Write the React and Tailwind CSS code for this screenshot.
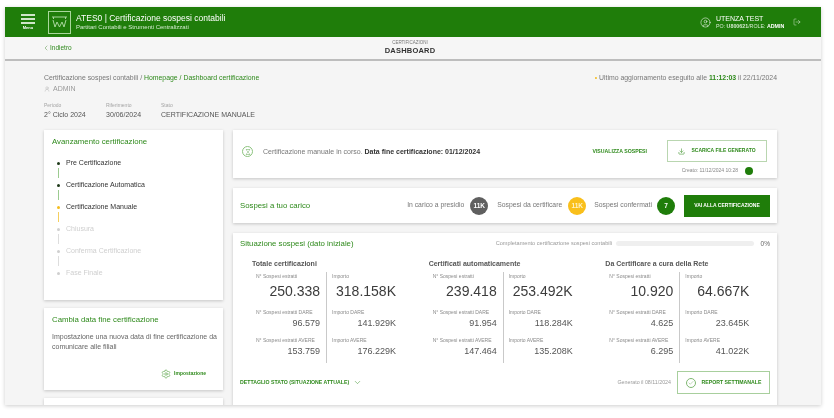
import React from 'react';
import { ChevronLeft, ChevronDown, UserRound, LogOut, Download, Settings, Hourglass, Check, CircleUser } from 'lucide-react';

const GREEN = 'text-[#2f8a1c]';

const steps = [
  { label: 'Pre Certificazione', dot: 'bg-[#1f3a1a]', text: 'text-[#333333]', line: 'bg-[#9ccb90]' },
  { label: 'Certificazione Automatica', dot: 'bg-[#1f3a1a]', text: 'text-[#333333]', line: 'bg-[#9ccb90]' },
  { label: 'Certificazione Manuale', dot: 'bg-[#f5bd1f]', text: 'text-[#333333]', line: 'bg-[#f5cf5f]' },
  { label: 'Chiusura', dot: 'bg-[#cfcfcf]', text: 'text-[#cfcfcf]', line: 'bg-[#dddddd]' },
  { label: 'Conferma Certificazione', dot: 'bg-[#cfcfcf]', text: 'text-[#cfcfcf]', line: 'bg-[#dddddd]' },
  { label: 'Fase Finale', dot: 'bg-[#cfcfcf]', text: 'text-[#cfcfcf]', line: '' },
];

const groups = [
  {
    title: 'Totale certificazioni',
    n: '250.338', imp: '318.158K', nd: '96.579', id: '141.929K', na: '153.759', ia: '176.229K',
  },
  {
    title: 'Certificati automaticamente',
    n: '239.418', imp: '253.492K', nd: '91.954', id: '118.284K', na: '147.464', ia: '135.208K',
  },
  {
    title: 'Da Certificare a cura della Rete',
    n: '10.920', imp: '64.667K', nd: '4.625', id: '23.645K', na: '6.295', ia: '41.022K',
  },
];

const Stat = ({ label, value, big }) => (
  <div className={big ? 'h-[36px]' : 'h-[28px]'}>
    <div className="text-[5px] leading-[8px] text-[#8a8a8a] whitespace-nowrap">{label}</div>
    <div className={big ? 'text-[14px] leading-[22px] text-right text-[#3c3c3c]' : 'text-[9px] leading-[14px] text-right text-[#555555]'}>
      {value}
    </div>
  </div>
);

const Group = ({ g }) => (
  <div className="w-[178px]">
    <div className="text-[7px] leading-[10px] font-bold text-[#555555] ml-[12px]">{g.title}</div>
    <div className="flex ml-[16px] mt-[3px]">
      <div className="w-[64px]">
        <Stat big label="N° Sospesi estratti" value={g.n} />
        <Stat label="N° Sospesi estratti DARE" value={g.nd} />
        <Stat label="N° Sospesi estratti AVERE" value={g.na} />
      </div>
      <div className="w-px h-[91px] bg-[#c9c9c9] ml-[6px] mr-[5px]" />
      <div className="w-[64px]">
        <Stat big label="Importo" value={g.imp} />
        <Stat label="Importo DARE" value={g.id} />
        <Stat label="Importo AVERE" value={g.ia} />
      </div>
    </div>
  </div>
);

const Logo = () => (
  <svg width="23" height="23" viewBox="0 0 23 23" fill="none" stroke="#a9d79c" strokeWidth="1">
    <rect x="0.5" y="0.5" width="22" height="22" />
    <path d="M4 6h15M5.500 6v2M17.500 6v2" />
    <path d="M5 9l2 7 2-5 2.500 5 2.500-5 2 5 2-7" />
  </svg>
);

export default function App() {
  return (
    <div className="min-h-[418px] bg-white pt-[7px] pl-[5px] font-['Liberation_Sans',Arial,sans-serif] blur-[0.6px]">
      <div className="w-[816px] h-[398px] overflow-hidden bg-[#f5f5f5] flex flex-col shadow-[0_1px_4px_rgba(0,0,0,0.2)]">
        {/* top bar */}
        <header className="h-[30px] shrink-0 bg-[#1f7d0a] flex items-center text-white">
          <div className="w-[43px] flex flex-col items-center pl-[3px]">
            <div className="w-[14px] flex flex-col gap-[2px]">
              <div className="h-[2px] bg-[#cfe6c8]" />
              <div className="h-[2px] bg-[#cfe6c8]" />
              <div className="h-[2px] bg-[#cfe6c8]" />
            </div>
            <div className="text-[4px] leading-[6px] font-bold mt-[1px]">Menu</div>
          </div>
          <Logo />
          <div className="ml-[5px] flex-1">
            <div className="text-[8.500px] leading-[11px]">ATES0 | Certificazione sospesi contabili</div>
            <div className="text-[6px] leading-[7px] text-[#d5ead0]">Partitari Contabili e Strumenti Centralizzati</div>
          </div>
          <CircleUser size={11} strokeWidth={1.2} className="mr-[5px]" />
          <div className="w-[77px]">
            <div className="text-[7px] leading-[8px]">UTENZA TEST</div>
            <div className="text-[5.300px] leading-[6px] text-[#d5ead0] whitespace-nowrap">
              PO: <b>U800621</b>/ROLE: <b className="text-white">ADMIN</b>
            </div>
          </div>
          <LogOut size={8} strokeWidth={1.4} className="mr-[20px] text-[#e6f3e2]" />
        </header>

        {/* sub bar */}
        <div className="relative h-[24px] shrink-0 bg-[#f6f6f6] border-b-2 border-[#bdbdbd] flex items-center pl-[37px]">
          <ChevronLeft size={8} className="text-[#7fae73]" />
          <span className={`text-[6.500px] ${GREEN}`}>Indietro</span>
          <div className="absolute left-0 right-[6px] top-[3px] text-center">
            <div className="text-[4.500px] leading-[6px] text-[#777777]">CERTIFICAZIONI</div>
            <div className="text-[7.500px] leading-[9px] font-bold tracking-[0.2px] text-[#333333]">DASHBOARD</div>
          </div>
        </div>

        {/* content */}
        <div className="flex-1 pl-[39px] pr-[44px] pt-[12px]">
          <div className="flex justify-between">
            <div>
              <div className="text-[6.900px] leading-[10px] text-[#777777]">
                Certificazione sospesi contabili / <span className={GREEN}>Homepage / Dashboard certificazione</span>
              </div>
              <div className="flex items-center gap-[2px] text-[7px] leading-[10px] mt-[1px] text-[#9a9a9a]">
                <UserRound size={6} strokeWidth={1.2} />
                <span className="ml-[1px]">ADMIN</span>
              </div>
            </div>
            <div className="text-[6.900px] leading-[10px] text-[#777777]">
              <span className="text-[#f5bd1f]">•</span> Ultimo aggiornamento eseguito alle <b className="text-[#2f8a1c]">11:12:03</b> il 22/11/2024
            </div>
          </div>

          <div className="flex mt-[7px] h-[23px]">
            <div className="w-[62px]">
              <div className="text-[5px] leading-[8px] text-[#a5a5a5]">Periodo</div>
              <div className="text-[7px] leading-[11px] text-[#555555]">2° Ciclo 2024</div>
            </div>
            <div className="w-[55px]">
              <div className="text-[5px] leading-[8px] text-[#a5a5a5]">Riferimento</div>
              <div className="text-[7px] leading-[11px] text-[#555555]">30/06/2024</div>
            </div>
            <div>
              <div className="text-[5px] leading-[8px] text-[#a5a5a5]">Stato</div>
              <div className="text-[7px] leading-[11px] text-[#555555]">CERTIFICAZIONE MANUALE</div>
            </div>
          </div>

          <div className="flex gap-[10px] mt-[6px]">
            {/* left column */}
            <div className="w-[179px] shrink-0 flex flex-col gap-[8px]">
              <div className="h-[170px] bg-white shadow-[0_1px_3px_rgba(0,0,0,0.2)] pl-[8px] pt-[6px]">
                <div className={`text-[7.800px] leading-[11px] ${GREEN}`}>Avanzamento certificazione</div>
                <div className="mt-[12px]">
                  {steps.map((s) => (
                    <div key={s.label} className="h-[22px] flex">
                      <div className="w-[14px] flex flex-col items-center pr-[1px] pt-[2.500px]">
                        <div className={`w-[3px] h-[3px] rounded-full ${s.dot}`} />
                        {s.line && <div className={`w-px h-[10px] mt-[3px] ${s.line}`} />}
                      </div>
                      <div className={`text-[7px] leading-[8px] ${s.text}`}>{s.label}</div>
                    </div>
                  ))}
                </div>
              </div>

              <div className="h-[82px] bg-white shadow-[0_1px_3px_rgba(0,0,0,0.2)] pl-[8px] pr-[4px] pt-[6px]">
                <div className={`text-[7.800px] leading-[11px] ${GREEN}`}>Cambia data fine certificazione</div>
                <div className="text-[7px] leading-[10px] text-[#666666] mt-[7px]">
                  Impostazione una nuova data di fine certificazione da comunicare alle filiali
                </div>
                <div className="flex items-center justify-end gap-[3px] mt-[17px] pr-[13px]">
                  <Settings size={10} strokeWidth={1.5} className="text-[#5aa548]" />
                  <span className={`text-[5px] font-bold ${GREEN}`}>Impostazione</span>
                </div>
              </div>

              <div className="h-[20px] bg-white shadow-[0_1px_3px_rgba(0,0,0,0.2)]" />
            </div>

            {/* right column */}
            <div className="w-[544px] shrink-0 flex flex-col gap-[10px]">
              <div className="h-[48px] bg-white shadow-[0_1px_3px_rgba(0,0,0,0.2)] flex pl-[9px] pr-[10px] pt-[10px]">
                <div className="w-[11px] h-[11px] mt-[6px] rounded-full border border-[#8cc47e] flex items-center justify-center">
                  <Hourglass size={6} strokeWidth={1.5} className="text-[#4f9a3c]" />
                </div>
                <div className="ml-[10px] mt-[7px] flex-1 text-[7px] leading-[9px] text-[#777777]">
                  Certificazione manuale in corso. <b className="text-[#333333]">Data fine certificazione: 01/12/2024</b>
                </div>
                <div className={`mt-[7px] text-[5.200px] leading-[8px] font-bold ${GREEN} mr-[20px]`}>VISUALIZZA SOSPESI</div>
                <div className="flex flex-col items-end">
                  <div className="w-[100px] h-[22px] border border-[#b9d6b0] flex items-center justify-center gap-[6px]">
                    <Download size={7} strokeWidth={1.8} className="text-[#2f8a1c]" />
                    <span className={`text-[5px] font-bold ${GREEN}`}>SCARICA FILE GENERATO</span>
                  </div>
                  <div className="flex items-center mt-[4px] mr-[14px] h-[9px]">
                    <span className="text-[5px] text-[#888888]">Creato: 11/12/2024 10:28</span>
                    <span className="w-[8px] h-[8px] rounded-full bg-[#1f7d0a] ml-[7px]" />
                  </div>
                </div>
              </div>

              <div className="h-[35px] bg-white shadow-[0_1px_3px_rgba(0,0,0,0.2)] flex items-center pl-[7px] pr-[7px]">
                <div className={`flex-1 text-[7.800px] ${GREEN}`}>Sospesi a tuo carico</div>
                <span className="text-[6.800px] text-[#777777]">In carico a presidio</span>
                <span className="w-[18px] h-[18px] ml-[6px] rounded-full bg-[#5f5f5f] text-white text-[6.500px] font-bold flex items-center justify-center">11K</span>
                <span className="text-[6.800px] text-[#777777] ml-[9px]">Sospesi da certificare</span>
                <span className="w-[18px] h-[18px] ml-[6px] rounded-full bg-[#f9bf1b] text-[#fff3c9] text-[6.500px] font-bold flex items-center justify-center">11K</span>
                <span className="text-[6.800px] text-[#777777] ml-[8px]">Sospesi confermati</span>
                <span className="w-[18px] h-[18px] ml-[5px] rounded-full bg-[#1f7d0a] text-white text-[6.500px] font-bold flex items-center justify-center">7</span>
                <div className="w-[86px] h-[22px] ml-[9px] bg-[#1f7d0a] text-white text-[5px] font-bold flex items-center justify-center whitespace-nowrap">
                  VAI ALLA CERTIFICAZIONE
                </div>
              </div>

              <div className="h-[180px] bg-white shadow-[0_1px_3px_rgba(0,0,0,0.2)] px-[7px] pt-[5px]">
                <div className="flex items-center h-[11px]">
                  <div className={`flex-1 text-[7.800px] ${GREEN}`}>Situazione sospesi (dato iniziale)</div>
                  <span className="text-[5.600px] text-[#999999]">Completamento certificazione sospesi contabili</span>
                  <div className="w-[138px] h-[5px] ml-[4px] rounded-full bg-[#efefef]" />
                  <span className="w-[16px] text-right text-[6.500px] text-[#666666]">0%</span>
                </div>
                <div className="flex mt-[10px]">
                  {groups.map((g) => (
                    <Group key={g.title} g={g} />
                  ))}
                </div>
                <div className="flex items-center mt-[7px] h-[23px]">
                  <div className={`flex-1 flex items-center gap-[4px] text-[5.200px] font-bold ${GREEN}`}>
                    DETTAGLIO STATO (SITUAZIONE ATTUALE)
                    <ChevronDown size={9} strokeWidth={1.3} />
                  </div>
                  <span className="text-[5.300px] text-[#999999]">Generato il 08/11/2024</span>
                  <div className="w-[93px] h-[23px] ml-[6px] border border-[#a8cf9d] flex items-center justify-center gap-[6px]">
                    <div className="w-[10px] h-[10px] rounded-full border border-[#7fb871] flex items-center justify-center">
                      <Check size={6} strokeWidth={1.5} className="text-[#4f9a3c]" />
                    </div>
                    <span className={`text-[5.200px] font-bold ${GREEN}`}>REPORT SETTIMANALE</span>
                  </div>
                </div>
              </div>
            </div>
          </div>
        </div>
      </div>
    </div>
  );
}
